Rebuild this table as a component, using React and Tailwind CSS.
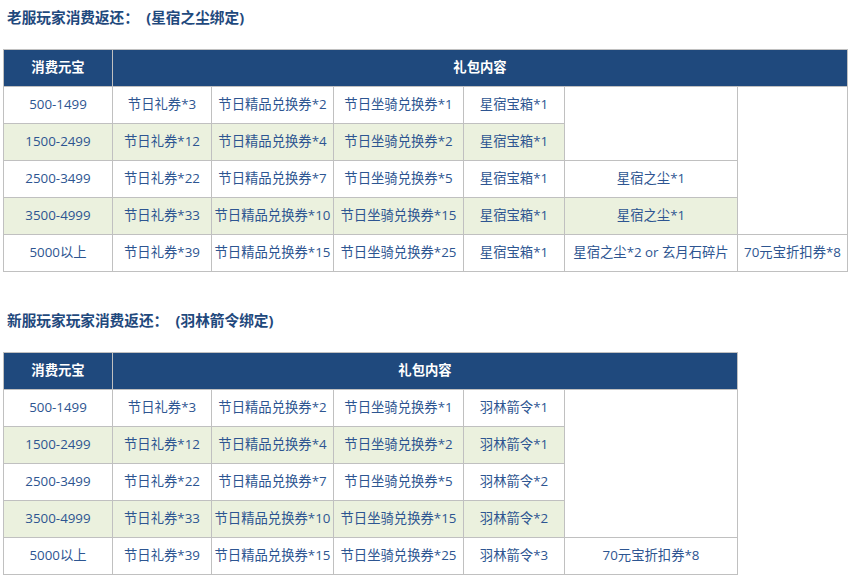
import React from "react";

const G = "bg-[#ebf1de]";
const td = "border border-[#c0c0c0] text-center align-middle h-[37px] p-0 whitespace-nowrap";
const th = "border border-[#c0c0c0] bg-[#1f497d] text-white font-bold text-center align-middle h-[37px] p-0";

function Cell({ children, green, ...rest }) {
  return (
    <td className={`${td} ${green ? G : "bg-white"}`} {...rest}>
      {children}
    </td>
  );
}

function Cols({ seven }) {
  return (
    <colgroup>
      <col className="w-[109px]" />
      <col className="w-[99px]" />
      <col className="w-[122px]" />
      <col className="w-[130px]" />
      <col className="w-[101px]" />
      <col className="w-[173px]" />
      {seven && <col className="w-[110px]" />}
    </colgroup>
  );
}

const rows = [
  ["500-1499", "3", "2", "1"],
  ["1500-2499", "12", "4", "2"],
  ["2500-3499", "22", "7", "5"],
  ["3500-4999", "33", "10", "15"],
  ["5000以上", "39", "15", "25"],
];

export default function App() {
  return (
    <div
      className="w-[852px] h-[577px] bg-white text-[13.33px] text-[#2d5591] pl-[3px] pt-[6px]"
      style={{ fontFamily: '"Open Sans", "Noto Sans CJK SC", sans-serif' }}
    >
      <div className="pl-[4px] h-[22px] leading-[22px] font-bold text-[14.67px] text-[#1f497d]">
        老服玩家消费返还：　(星宿之尘绑定)
      </div>
      <table className="mt-[21px] border-collapse table-fixed w-[845px]">
        <Cols seven />
        <tbody>
          <tr>
            <th className={th}>消费元宝</th>
            <th className={th} colSpan={6}>礼包内容</th>
          </tr>
          {rows.map((r, i) => {
            const green = i % 2 === 1;
            return (
              <tr key={i}>
                <Cell green={green}>{r[0]}</Cell>
                <Cell green={green}>节日礼券*{r[1]}</Cell>
                <Cell green={green}>节日精品兑换券*{r[2]}</Cell>
                <Cell green={green}>节日坐骑兑换券*{r[3]}</Cell>
                <Cell green={green}>星宿宝箱*1</Cell>
                {i === 0 && <Cell rowSpan={2}></Cell>}
                {(i === 2 || i === 3) && <Cell green={green}>星宿之尘*1</Cell>}
                {i === 4 && <Cell>星宿之尘*2 or 玄月石碎片</Cell>}
                {i === 0 && <Cell rowSpan={4}></Cell>}
                {i === 4 && <Cell>70元宝折扣券*8</Cell>}
              </tr>
            );
          })}
        </tbody>
      </table>
      <div className="mt-[37px] pl-[4px] h-[22px] leading-[22px] font-bold text-[14.67px] text-[#1f497d]">
        新服玩家玩家消费返还：　(羽林箭令绑定)
      </div>
      <table className="mt-[21px] border-collapse table-fixed w-[735px]">
        <Cols />
        <tbody>
          <tr>
            <th className={th}>消费元宝</th>
            <th className={th} colSpan={5}>礼包内容</th>
          </tr>
          {rows.map((r, i) => {
            const green = i % 2 === 1;
            const yl = ["1", "1", "2", "2", "3"][i];
            return (
              <tr key={i}>
                <Cell green={green}>{r[0]}</Cell>
                <Cell green={green}>节日礼券*{r[1]}</Cell>
                <Cell green={green}>节日精品兑换券*{r[2]}</Cell>
                <Cell green={green}>节日坐骑兑换券*{r[3]}</Cell>
                <Cell green={green}>羽林箭令*{yl}</Cell>
                {i === 0 && <Cell rowSpan={4}></Cell>}
                {i === 4 && <Cell>70元宝折扣券*8</Cell>}
              </tr>
            );
          })}
        </tbody>
      </table>
    </div>
  );
}
